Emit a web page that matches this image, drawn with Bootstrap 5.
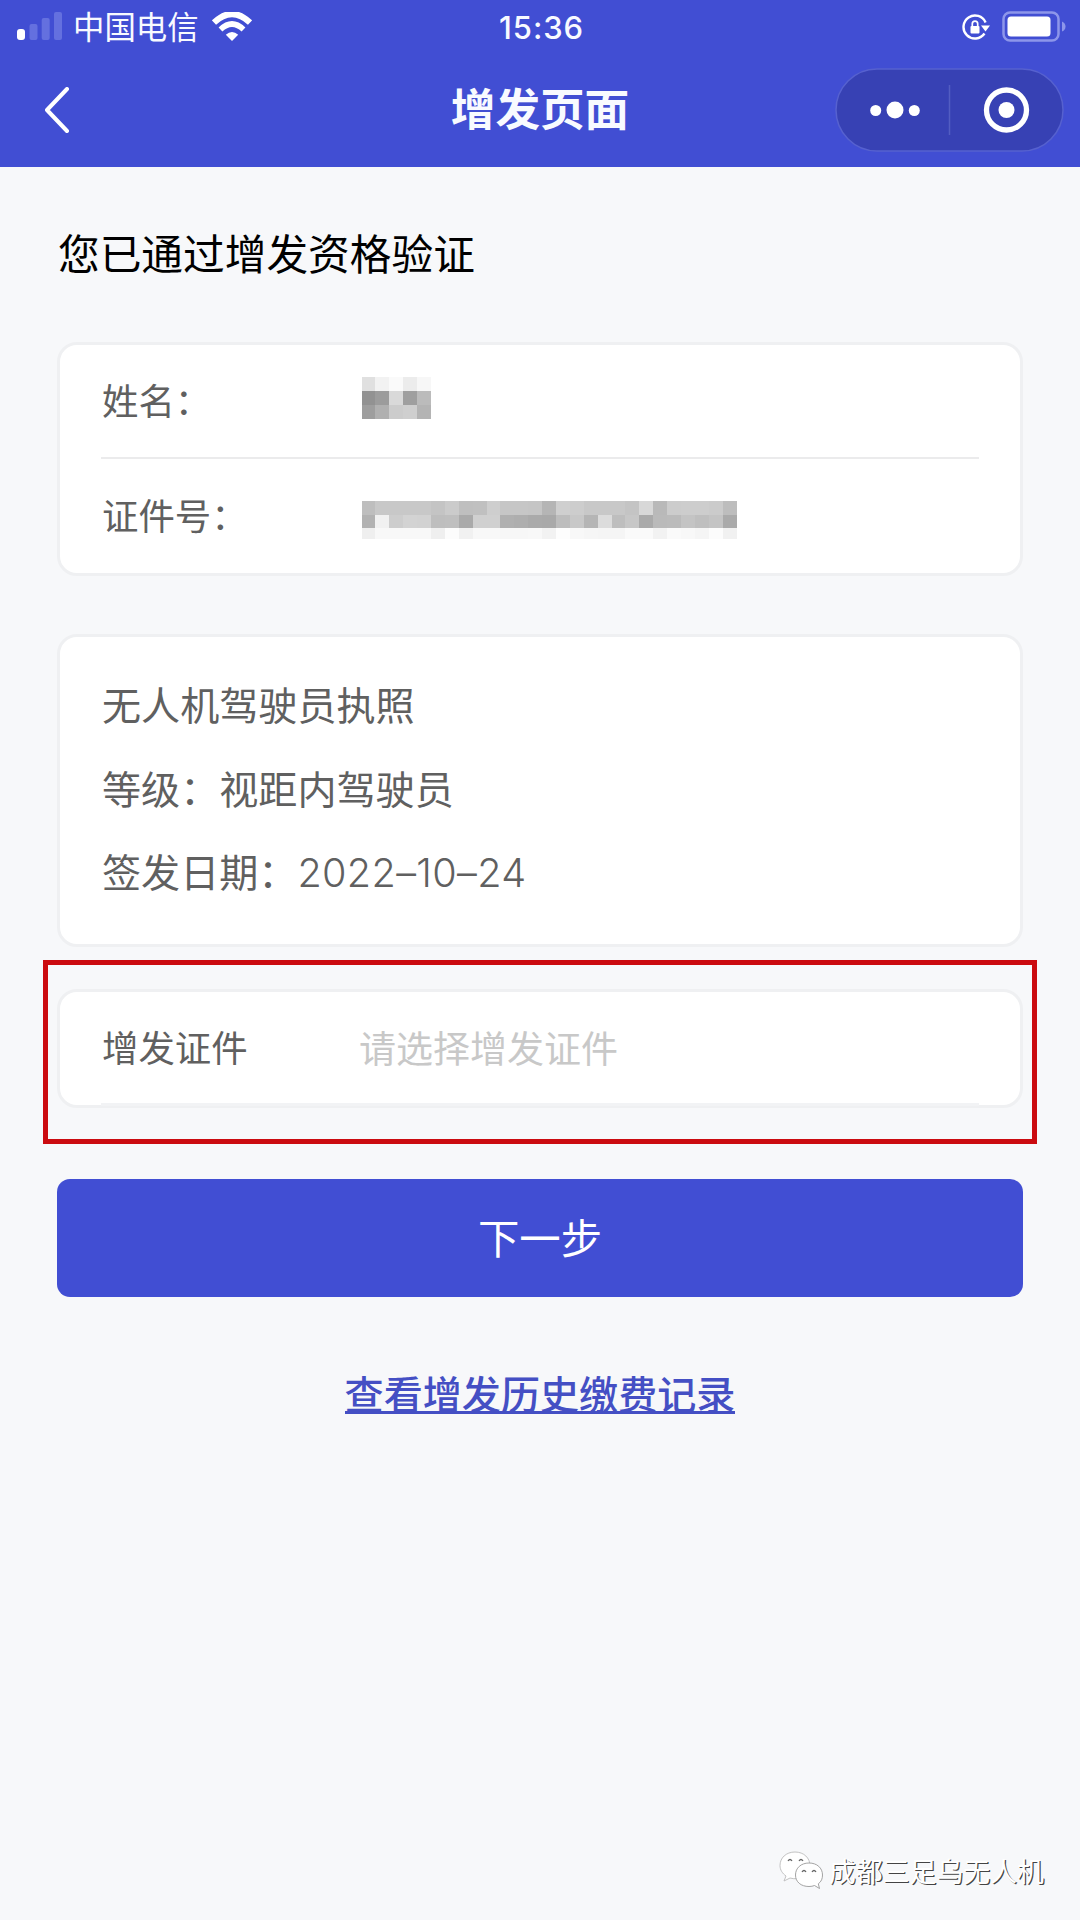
<!DOCTYPE html>
<html lang="zh-CN">
<head>
<meta charset="utf-8">
<meta name="viewport" content="width=device-width, initial-scale=1">
<title>增发页面</title>
<link href="https://cdn.jsdelivr.net/npm/bootstrap@5.3.0/dist/css/bootstrap.min.css" rel="stylesheet">
<style>
  body { background:#f7f8fa; color:#000; min-height:1920px; font-family:Inter,"Noto Sans CJK SC",sans-serif; overflow-x:hidden; }
  svg { display:block; flex:none; }
  .app-head { background:#414ed3; height:166.500px; color:#f8faff; }
  .status-bar { height:54px; padding:0 14px 0 17px; }
  .side { flex:1 1 0; }
  .carrier { font-size:31.4px; line-height:54px; padding-top:1px; margin-left:10px; margin-right:13px; }
  .clock { font-size:31px; line-height:54px; font-weight:500; letter-spacing:.9px; padding-top:1px; }
  .title-bar { height:112px; padding:0 16px 0 44px; }
  .page-title { font-size:44.6px; line-height:112px; font-weight:700; }
  .title-bar .side { flex:none; width:229px; }
  .title-bar .side:first-child { width:201px; }
  .content { padding:0 57px; }
  .notice { font-size:41.7px; line-height:60px; margin:57.500px 0 0; padding:1px 0 0 1px; height:118px; }
  .panel { background:#fff; border:3px solid #eff0f2; border-radius:20px; color:#606060; padding:0 41px; }
  .field { font-size:36.4px; height:114px; padding:2px 0 0 1px; }
  .field-name { width:259.500px; flex:none; }
  .picker .field-name { width:257px; }
  .split { border-bottom:2px solid #ebebec; }
  .mosaic { display:grid; grid-auto-rows:13.9px; }
  .mosaic.name { grid-template-columns:repeat(5,13.9px); margin-bottom:8px; }
  .mosaic.idno { grid-template-columns:repeat(27,13.9px); margin-top:6px; grid-template-rows:13.9px 13.9px 11px; }
  .licence { font-size:39.1px; line-height:83.5px; height:313px; margin-top:58px; padding:27px 42px 0; }
  .issued { font-weight:300; font-size:39.600px; letter-spacing:.35px; }
  .marked { margin:13px -14px 0; border:5px solid #cb0b10; height:184px; padding:24px 9px 0; }
  .picker { height:119px; position:relative; }
  .picker::after { content:""; position:absolute; left:41px; right:41px; bottom:-1px; height:3px; background:#f2f3f5; }
  .picker .field { height:113px; }
  .hint { color:#c8c8c8; font-size:37px; }
  .next-btn { background:#414ed3; border:0; color:#fff; height:118px; border-radius:13px; font-size:41.4px; line-height:1; margin-top:35px; padding-top:9px; }
  .next-btn:hover { background:#414ed3; color:#fff; }
  .history { color:#444fc4; font-size:39.1px; line-height:62px; font-weight:500; margin-top:67px; text-decoration:none; }
  .history span { border-bottom:3px solid #444fc4; display:inline-block; height:50px; }
  .watermark { position:absolute; right:36px; top:1850px; height:42px; }
  .watermark span { color:#fff; font-size:26.9px; line-height:42px; margin-left:5px; padding-top:1px; text-shadow:1.2px 1.2px 0.6px #444; }
</style>
<script src="https://cdn.jsdelivr.net/npm/bootstrap@5.3.0/dist/js/bootstrap.bundle.min.js"></script>
</head>
<body class="position-relative">
<header class="app-head">
  <div class="status-bar d-flex align-items-center">
    <div class="side d-flex align-items-center">
      <svg width="46" height="30" viewBox="0 0 46 30"><rect x="0" y="17" width="8" height="11" rx="3" fill="#fff"/><g fill="#6470df"><rect x="12.5" y="12" width="8" height="16" rx="2"/><rect x="24.7" y="6" width="8" height="22" rx="2"/><rect x="37" y="0" width="8" height="28" rx="2"/></g></svg>
      <span class="carrier">中国电信</span>
      <svg width="40" height="30" viewBox="0 0 40 30" fill="none" stroke="#fff"><path d="M2 10.5Q20-6.500 38 10.500" stroke-width="6"/><path d="M8.500 17.500Q20 6.500 31.500 17.500" stroke-width="5.500"/><path d="M20 29L13.800 22.800Q20 17 26.200 22.800Z" fill="#fff" stroke="none"/></svg>
    </div>
    <div class="clock">15:36</div>
    <div class="side d-flex align-items-center justify-content-end">
      <svg width="28" height="28" viewBox="0 0 28 28"><path d="M22.500 20.500A11.500 11.500 0 1 1 23.600 9.500" fill="none" stroke="#fff" stroke-width="2.400"/><path d="M19 12.500H28L23.500 18.500Z" fill="#fff"/><rect x="8.500" y="13" width="9" height="7.500" rx="1" fill="#fff"/><path d="M10.300 13.500V10.800a2.700 2.700 0 0 1 5.400 0v2.700" fill="none" stroke="#fff" stroke-width="1.700"/></svg>
      <svg class="ms-2 ps-1" width="68" height="32" viewBox="0 0 64 32"><rect x="1.500" y="1.500" width="55" height="28" rx="6.500" fill="none" stroke="#8d96ea" stroke-width="2.500"/><rect x="5.500" y="5.500" width="43" height="20" rx="3.500" fill="#fff"/><path d="M60 10.500Q63.500 12 63.500 15.500T60 20.500Z" fill="#8d96ea"/></svg>
    </div>
  </div>
  <div class="title-bar d-flex align-items-center justify-content-between">
    <div class="side"><svg width="26" height="46" viewBox="0 0 26 46"><path d="M23 2L3 23L23 44" fill="none" stroke="#fff" stroke-width="4" stroke-linecap="round" stroke-linejoin="round"/></svg></div>
    <div class="page-title">增发页面</div>
    <div class="side d-flex justify-content-end">
      <svg width="229" height="84" viewBox="0 0 229 84"><rect x="1" y="1" width="227" height="82" rx="41" fill="#3741b4" stroke="#5661cf" stroke-width="1.500"/><g fill="#fff"><circle cx="40.700" cy="42.500" r="5.500"/><circle cx="60" cy="42" r="8.500"/><circle cx="79.300" cy="42.500" r="5.500"/><circle cx="171.500" cy="42" r="8"/></g><path d="M114.500 17V67" stroke="#535dc2" stroke-width="1.500"/><circle cx="171.500" cy="42" r="20" fill="none" stroke="#fff" stroke-width="5.300"/></svg>
    </div>
  </div>
</header>
<main class="content">
  <h1 class="notice fw-normal">您已通过增发资格验证</h1>
  <section class="panel">
    <div class="field split d-flex align-items-center"><span class="field-name">姓名：</span><div class="mosaic name" data-shades="e0f2faecf7 929cd99fbb 9eb0cccfb4"></div></div>
    <div class="field d-flex align-items-center"><span class="field-name">证件号：</span><div class="mosaic idno" data-shades="bec8c8c8c8c4cbbfc0cec6c6c5b5cfcdc8c8c8c4d8b9cccdcdcbbd b2f1cdd3d2bebfaad0d0b0aeaaa9bdc8b5dcbec7aababbc4bfc4aa eff8f8f8f8effcf1f8f8f7f7f8f2fdf8f6f5f5fafaf2faf8f5fcf1"></div></div>
  </section>
  <section class="panel licence">
    <div>无人机驾驶员执照</div>
    <div>等级：视距内驾驶员</div>
    <div>签发日期：<span class="issued">2022–10–24</span></div>
  </section>
  <div class="marked">
    <section class="panel picker">
      <div class="field d-flex align-items-center"><span class="field-name">增发证件</span><span class="hint">请选择增发证件</span></div>
    </section>
  </div>
  <button class="btn next-btn w-100 d-flex align-items-center justify-content-center" type="button">下一步</button>
  <a class="history d-block text-center" href="#"><span>查看增发历史缴费记录</span></a>
</main>
<div class="watermark d-flex align-items-center">
  <svg width="46" height="42" viewBox="0 0 46 42" fill="#fff" stroke="#999" stroke-width=".9"><path d="M17 2C8 2 2 8 2 15.500c0 4.500 2.500 8 6 10.500l-2 5 6-3c10 3 20-3 20-12C32 8 26 2 17 2Z" stroke="#bbb"/><path d="M31 13c-8 0-13.500 5-13.500 12S23 36.500 31 36.500q3 0 5.500-1l5 3-1.200-4.700C43.500 31.500 44.500 28.500 44.500 25 44.500 18 39 13 31 13Z"/><path d="M10 11q2-3 4 0M21 11q2-3 4 0M24 22q2-3 4 0M34 22q2-3 4 0" fill="none" stroke="#666" stroke-width="1.300"/></svg>
  <span>成都三足乌无人机</span>
</div>
<script>
  // Build the redaction blocks from two-digit grey levels.
  document.querySelectorAll('.mosaic').forEach(function (m) {
    m.dataset.shades.replace(/ /g, '').match(/../g).forEach(function (g) {
      var cell = document.createElement('i');
      cell.style.background = '#' + g + g + g;
      m.appendChild(cell);
    });
  });
</script>
</body>
</html>
